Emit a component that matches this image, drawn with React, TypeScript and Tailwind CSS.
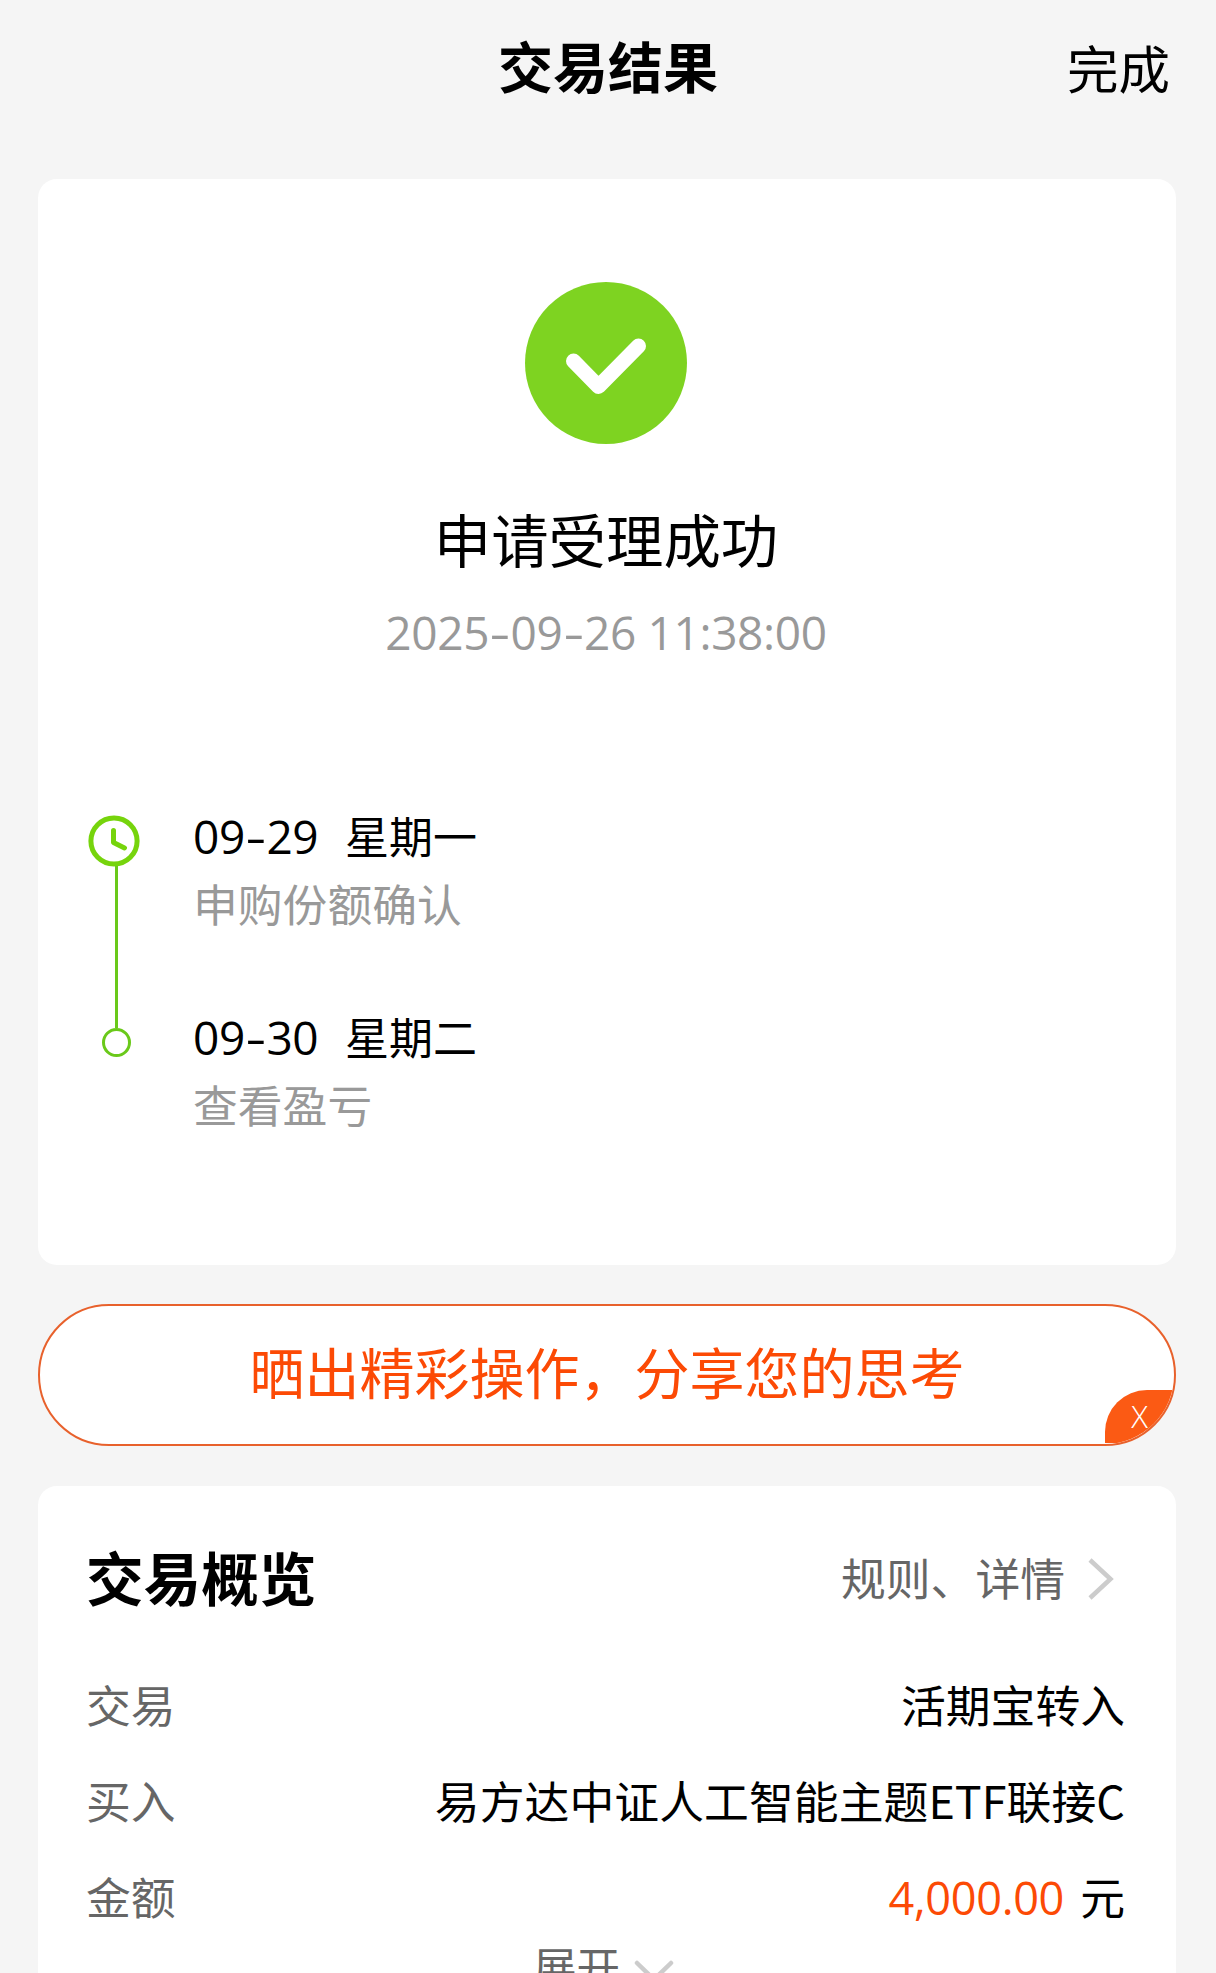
import { Fragment } from "react";

const steps = [
  { date: "09-29", day: "星期一", label: "申购份额确认" },
  { date: "09-30", day: "星期二", label: "查看盈亏" },
];

/* Digits with slightly wider hyphens */
function Digits({ value }: { value: string }) {
  return (
    <span className="font-['Open_Sans',sans-serif] text-[46px] tracking-[-0.35px]">
      {value.split("-").map((part, i) => (
        <Fragment key={i}>
          {i > 0 && (
            <span className="inline-block w-[21.5px] scale-x-140 text-center">
              -
            </span>
          )}
          {part}
        </Fragment>
      ))}
    </span>
  );
}

function Header() {
  return (
    <header className="grid h-[179px] shrink-0 grid-cols-[1fr_auto_1fr] items-start pr-[46px] pl-[46px]">
      <div />
      <h1 className="mt-[24px] text-[55px] leading-[80px] font-bold">
        交易结果
      </h1>
      <button className="mt-[27px] justify-self-end text-[51.5px] leading-[80px]">
        完成
      </button>
    </header>
  );
}

function Timeline() {
  return (
    <div className="mt-[142px] flex pl-[50px]">
      {/* Rail */}
      <div className="flex w-[56px] flex-col items-center pt-[11px]">
        <svg width="52" height="52" viewBox="0 0 52 52" fill="none" className="-ml-[4px]">
          <circle cx="26" cy="26" r="23.1" stroke="#76d40c" strokeWidth="5" />
          <path
            d="M25.5 15.5V27.5L36.5 33"
            stroke="#76d40c"
            strokeWidth="5"
            strokeLinecap="round"
            strokeLinejoin="round"
          />
        </svg>
        <div className="-mt-px h-[162px] w-[3px] bg-[#6ac91a]" />
        <div className="h-[29px] w-[29px] rounded-full border-3 border-[#6ac91a]" />
      </div>

      {/* Steps */}
      <div className="ml-[49px]">
        {steps.map((step) => (
          <div key={step.date} className="h-[201px]">
            <div className="flex h-[62px] items-center text-[44px] leading-[60px]">
              <span className="w-[152px]">
                <Digits value={step.date} />
              </span>
              <span>{step.day}</span>
            </div>
            <div className="mt-[7px] text-[44.8px] leading-[60px] text-[#999]">
              {step.label}
            </div>
          </div>
        ))}
      </div>
    </div>
  );
}

function ResultCard() {
  return (
    <section className="h-[1086px] shrink-0 rounded-[19px] bg-white pt-[103px]">
      <div className="flex flex-col items-center pr-[2px]">
        <svg width="162" height="162" viewBox="0 0 162 162" fill="none">
          <circle cx="81" cy="81" r="81" fill="#7ed321" />
          <path
            d="M48.5 79L73.5 104.5L113.5 64"
            stroke="white"
            strokeWidth="15"
            strokeLinecap="round"
            strokeLinejoin="round"
          />
        </svg>
        <h2 className="mt-[54px] text-[57.4px] leading-[80px]">
          申请受理成功
        </h2>
        <p className="mt-[24px] flex h-[60px] items-center leading-[60px] whitespace-pre text-[#999]">
          <Digits value="2025-09-26 11:38:00" />
        </p>
      </div>
      <Timeline />
    </section>
  );
}

function ShareBanner() {
  return (
    <div className="relative mt-[39px] flex h-[142px] shrink-0 items-center justify-center overflow-hidden rounded-full border-2 border-[#e8612c] bg-white">
      <span className="-mt-[11px] text-[55px] leading-[80px] text-[#fc4a05]">
        晒出精彩操作，分享您的思考
      </span>
      <button className="absolute right-0 bottom-px h-[53px] w-[69px] rounded-tl-[42px] bg-[#fb5a14] text-white">
        <span className="block font-['Open_Sans',sans-serif] text-[31px] leading-[53px] font-light">
          X
        </span>
      </button>
    </div>
  );
}

function Overview() {
  return (
    <section className="mt-[40px] h-[560px] shrink-0 rounded-t-[19px] bg-white pt-[50px] pr-[51px] pl-[48px]">
      <div className="flex h-[80px] items-center justify-between">
        <h2 className="text-[57.6px] leading-[80px] font-bold">交易概览</h2>
        <button className="flex items-center pr-[10px] text-[44.8px] leading-[60px] text-[#666]">
          <span className="mt-[2px]">规则、详情</span>
          <svg width="28" height="46" viewBox="0 0 28 46" fill="none" className="mt-[6px] ml-[22px]">
            <path d="M3 4L23.5 23L3 42" stroke="#ccc" strokeWidth="4.5" />
          </svg>
        </button>
      </div>

      <div className="mt-[40px] text-[44.8px] leading-[96px]">
        <div className="flex justify-between">
          <span className="text-[#666]">交易</span>
          <span>活期宝转入</span>
        </div>
        <div className="flex justify-between">
          <span className="text-[#666]">买入</span>
          <span className="tracking-[0.08px]">
            易方达中证人工智能主题ETF联接C
          </span>
        </div>
        <div className="flex justify-between">
          <span className="text-[#666]">金额</span>
          <span className="flex">
            <span className="mr-[16px] origin-right scale-x-98 text-[#fc4a05]">
              <Digits value="4,000.00" />
            </span>
            元
          </span>
        </div>
      </div>

      <button className="-mt-[9px] flex w-full items-center justify-center pr-[3px] text-[43.5px] leading-[60px] text-[#666]">
        展开
        <svg width="42" height="26" viewBox="0 0 42 26" fill="none" className="mt-[12px] ml-[13px]">
          <path
            d="M4 4L21 20.5L38 4"
            stroke="#ccc"
            strokeWidth="4.5"
            strokeLinecap="round"
          />
        </svg>
      </button>
    </section>
  );
}

export default function App() {
  return (
    <div className="flex h-[1973px] w-[1216px] flex-col overflow-hidden bg-[#f5f5f5] font-['Noto_Sans_CJK_SC',sans-serif] text-black">
      <Header />
      <main className="flex flex-col pr-[40px] pl-[38px]">
        <ResultCard />
        <ShareBanner />
        <Overview />
      </main>
    </div>
  );
}
